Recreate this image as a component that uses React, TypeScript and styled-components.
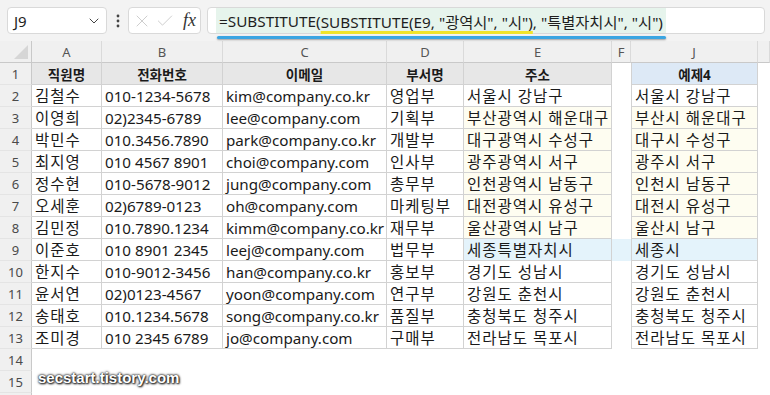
import styled, { createGlobalStyle } from 'styled-components';
import { ChevronDown, X, Check } from 'lucide-react';

const GlobalStyle = createGlobalStyle`
  html, body {
    margin: 0;
    padding: 0;
    background: #ffffff;
  }

  body {
    font-family: "Noto Sans", "Noto Sans CJK KR", sans-serif;
  }
`;

const Page = styled.div`
  position: relative;
  width: 770px;
  height: 395px;
  overflow: hidden;
  background: #ffffff;
`;

const FormulaBar = styled.div`
  display: flex;
  align-items: flex-start;

  height: 41px;
  box-sizing: border-box;
  padding: 7px 5px 0 7px;

  background: #f3f3f3;
`;

const Box = styled.div`
  display: flex;
  align-items: center;

  height: 27px;
  box-sizing: border-box;

  border: 1px solid #d9d9d9;
  border-radius: 4px;

  background: #ffffff;
`;

const NameBox = styled(Box)`
  width: 100px;
  justify-content: space-between;
  padding: 0 4px 0 6px;

  font-size: 15px;
  color: #222;
`;

const Dots = styled.div`
  display: flex;
  justify-content: center;
  align-items: center;

  width: 21px;
  height: 27px;
`;

const FxBox = styled(Box)`
  width: 73px;
  gap: 3px;
  padding: 0 4px 0 3px;
`;

const Fx = styled.span`
  margin-left: 5px;

  font-family: "Liberation Serif", "DejaVu Serif", serif;
  font-style: italic;
  font-size: 18px;
  color: #333;
`;

const Input = styled(Box)`
  flex: 1;
  margin-left: 6px;
  padding: 0 0 0 8px;
  align-items: stretch;
`;

const Formula = styled.div`
  position: relative;
  display: flex;
  align-items: center;

  padding: 0 3px;

  background: #e6f4ec;

  font-size: 15.3px;
  color: #1e1e1e;
  white-space: nowrap;

  &::after {
    content: '';
    position: absolute;
    left: 1px;
    right: 0;
    bottom: -6px;
    height: 3px;
    border-radius: 2px;
    background: #3ba6e2;
    box-shadow: 0 1px 2px rgba(0, 0, 0, 0.35);
  }
`;

const Mark = styled.span`
  text-decoration: underline;
  text-decoration-color: #f1e42a;
  text-decoration-thickness: 3px;
  text-underline-offset: 3px;
`;

const Sheet = styled.div`
  display: grid;
  grid-template-columns: 32px 70px 121px 164px 77px 148px 19px 127px 1fr;
  grid-auto-rows: 22px;
`;

const Corner = styled.div`
  display: flex;
  align-items: flex-end;
  justify-content: flex-end;
  padding: 0 3px 3px 0;

  background: #f0f0f0;
  border-right: 1px solid #c9c9c9;
  border-bottom: 1px solid #c9c9c9;
`;

const ColHead = styled.div`
  display: flex;
  justify-content: center;
  align-items: center;

  background: #f0f0f0;
  border-right: 1px solid #dadada;
  border-bottom: 1px solid #c9c9c9;

  font-size: 13px;
  color: #555;
`;

const RowHead = styled.div`
  display: flex;
  justify-content: center;
  align-items: center;

  background: #f0f0f0;
  border-right: 1px solid #c9c9c9;
  border-bottom: 1px solid #e4e4e4;

  font-size: 13px;
  color: #4a4a4a;
`;

const Cell = styled.div<{ $bg: string; $table: boolean; $head: boolean; $left: boolean; $ko: boolean }>`
  display: flex;
  align-items: center;
  justify-content: ${(p) => (p.$head ? 'center' : 'flex-start')};

  padding: 0 3px;
  overflow: hidden;
  white-space: nowrap;

  background: ${(p) => p.$bg};
  border-right: ${(p) => (p.$table ? '1px solid #d2d2d2' : 'none')};
  border-bottom: ${(p) => (p.$table ? '1px solid #d2d2d2' : 'none')};
  border-left: ${(p) => (p.$left ? '1px solid #d2d2d2' : 'none')};

  font-size: ${(p) => (p.$head ? '13.5px' : p.$ko ? '15.5px' : '15.2px')};
  letter-spacing: ${(p) => (p.$ko && !p.$head ? '1px' : '0')};
  font-weight: ${(p) => (p.$head ? 700 : 400)};
  color: #1a1a1a;
`;

const Watermark = styled.div`
  position: absolute;
  left: 38px;
  top: 369px;

  font-family: "Liberation Sans", sans-serif;
  font-weight: 700;
  font-size: 15px;
  color: #ffffff;
  text-shadow: 0 0 2px #000, 1px 1px 2px #222, 0 0 3px #333;
`;

const columns = ['A', 'B', 'C', 'D', 'E', 'F', 'J'];

const rows: string[][] = [
  ['직원명', '전화번호', '이메일', '부서명', '주소', '', '예제4'],
  ['김철수', '010-1234-5678', 'kim@company.co.kr', '영업부', '서울시 강남구', '', '서울시 강남구'],
  ['이영희', '02)2345-6789', 'lee@company.com', '기획부', '부산광역시 해운대구', '', '부산시 해운대구'],
  ['박민수', '010.3456.7890', 'park@company.co.kr', '개발부', '대구광역시 수성구', '', '대구시 수성구'],
  ['최지영', '010 4567 8901', 'choi@company.com', '인사부', '광주광역시 서구', '', '광주시 서구'],
  ['정수현', '010-5678-9012', 'jung@company.com', '총무부', '인천광역시 남동구', '', '인천시 남동구'],
  ['오세훈', '02)6789-0123', 'oh@company.com', '마케팅부', '대전광역시 유성구', '', '대전시 유성구'],
  ['김민정', '010.7890.1234', 'kimm@company.co.kr', '재무부', '울산광역시 남구', '', '울산시 남구'],
  ['이준호', '010 8901 2345', 'leej@company.com', '법무부', '세종특별자치시', '', '세종시'],
  ['한지수', '010-9012-3456', 'han@company.co.kr', '홍보부', '경기도 성남시', '', '경기도 성남시'],
  ['윤서연', '02)0123-4567', 'yoon@company.com', '연구부', '강원도 춘천시', '', '강원도 춘천시'],
  ['송태호', '010.1234.5678', 'song@company.co.kr', '품질부', '충청북도 청주시', '', '충청북도 청주시'],
  ['조미경', '010 2345 6789', 'jo@company.com', '구매부', '전라남도 목포시', '', '전라남도 목포시'],
  ['', '', '', '', '', '', ''],
  ['', '', '', '', '', '', ''],
  ['', '', '', '', '', '', ''],
];

const hangul = /[가-힣]/;

function cellBg(r: number, col: string) {
  if (r === 1) return col === 'J' ? '#dde9f6' : col === 'F' ? '#ffffff' : '#e7e7e7';
  if (r === 9 && (col === 'E' || col === 'F' || col === 'J')) return '#e4f3fb';
  if (r >= 3 && r <= 8 && (col === 'E' || col === 'J')) return '#fefdf1';
  return '#ffffff';
}

export default function App() {
  return (
    <>
      <GlobalStyle />
      <Page>
        <FormulaBar>
          <NameBox>
            J9
            <ChevronDown size={16} color="#444" strokeWidth={1.5} />
          </NameBox>
          <Dots>
            <svg width="4" height="14" viewBox="0 0 4 14">
              <circle cx="2" cy="2" r="1.4" fill="#444" />
              <circle cx="2" cy="7" r="1.4" fill="#444" />
              <circle cx="2" cy="12" r="1.4" fill="#444" />
            </svg>
          </Dots>
          <FxBox>
            <X size={20} color="#c4c4c4" strokeWidth={1} />
            <Check size={20} color="#c4c4c4" strokeWidth={1} />
            <Fx>fx</Fx>
          </FxBox>
          <Input>
            <Formula>
              =SUBSTITUTE(<Mark>SUBSTITUTE(E9, "광역시", "시")</Mark>, "특별자치시", "시")
            </Formula>
          </Input>
        </FormulaBar>

        <Sheet>
          <Corner>
            <svg width="14" height="14" viewBox="0 0 14 14">
              <polygon points="14,0 14,14 0,14" fill="#d6d6d6" />
            </svg>
          </Corner>
          {columns.map((c) => (
            <ColHead key={c}>{c}</ColHead>
          ))}
          <ColHead />

          {rows.map((row, i) => {
            const r = i + 1;
            return [
              <RowHead key={`h${r}`}>{r <= 15 ? r : ''}</RowHead>,
              ...columns.map((col, j) => (
                <Cell
                  key={`${col}${r}`}
                  $bg={cellBg(r, col)}
                  $table={r <= 13 && col !== 'F'}
                  $head={r === 1}
                  $left={r <= 13 && col === 'J'}
                  $ko={hangul.test(row[j])}
                >
                  {row[j]}
                </Cell>
              )),
              <Cell key={`x${r}`} $bg="#ffffff" $table={false} $head={false} $left={false} $ko={false} />,
            ];
          })}
        </Sheet>

        <Watermark>secstart.tistory.com</Watermark>
      </Page>
    </>
  );
}
